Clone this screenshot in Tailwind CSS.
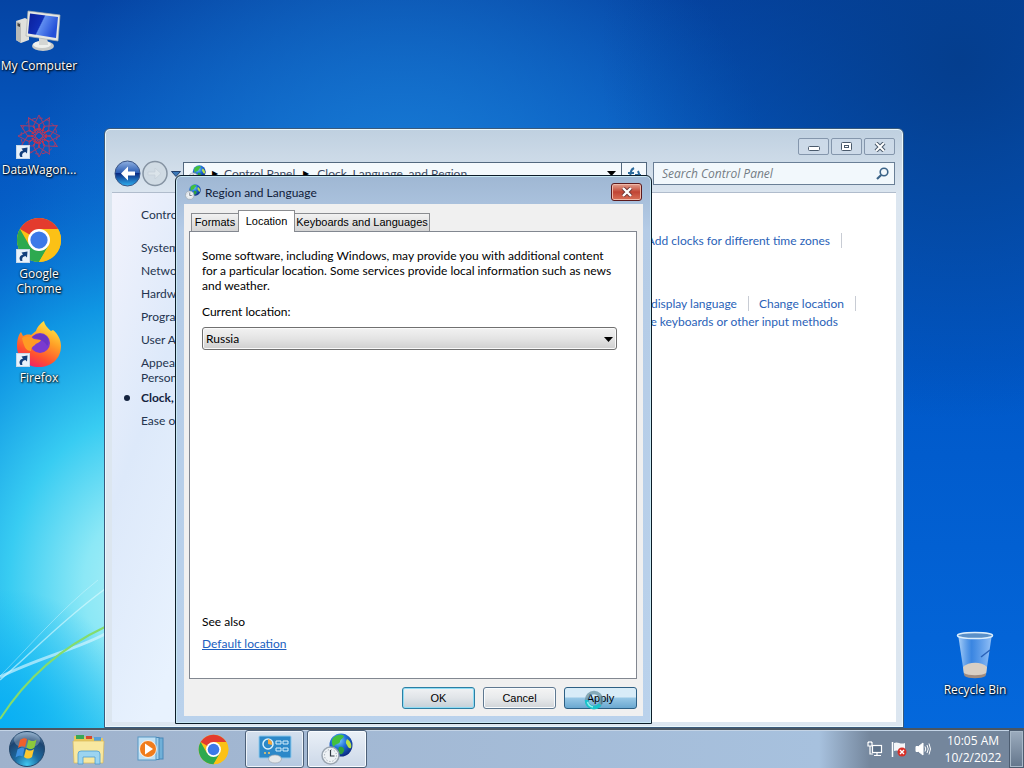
<!DOCTYPE html>
<html lang="en">
<head>
<meta charset="utf-8">
<title>Region and Language</title>
<script src="https://cdn.jsdelivr.net/npm/@tailwindcss/browser@4"></script>
</head>
<body class="flex h-screen flex-col overflow-hidden font-['Open_Sans','Noto_Sans',sans-serif] text-[12px] leading-[15px] text-black">

<!-- Shared artwork -->
<svg class="absolute size-0" aria-hidden="true">
  <defs>
    <radialGradient id="globeFill" cx=".4" cy=".3" r=".75"><stop offset="0" stop-color="#7fd0ff"/><stop offset=".45" stop-color="#1f6fd8"/><stop offset="1" stop-color="#08227a"/></radialGradient>
    <linearGradient id="screenFill" x1="0" y1="0" x2="1" y2=".4"><stop offset="0" stop-color="#0a1f9a"/><stop offset=".5" stop-color="#1030b8"/><stop offset=".54" stop-color="#5f8df0"/><stop offset="1" stop-color="#2450d8"/></linearGradient>
    <linearGradient id="foxFill" x1=".8" y1="0" x2=".3" y2="1"><stop offset="0" stop-color="#fff04a"/><stop offset=".4" stop-color="#ffa026"/><stop offset=".75" stop-color="#ff5030"/><stop offset="1" stop-color="#f0206a"/></linearGradient>
    <radialGradient id="orbFill" cx=".5" cy=".95" r=".9"><stop offset="0" stop-color="#40c8f0"/><stop offset=".4" stop-color="#1c6aa0"/><stop offset=".8" stop-color="#1d4470"/><stop offset="1" stop-color="#5f88b0"/></radialGradient>
    <linearGradient id="binFill" x1="0" y1="0" x2="1" y2="0"><stop offset="0" stop-color="#c8e4ff" stop-opacity=".85"/><stop offset=".4" stop-color="#5f9ce8" stop-opacity=".6"/><stop offset="1" stop-color="#b8d8ff" stop-opacity=".8"/></linearGradient>
    <linearGradient id="backFill" x1="0" y1="0" x2="0" y2="1"><stop offset="0" stop-color="#8fb0e0"/><stop offset=".48" stop-color="#2a5cb4"/><stop offset=".5" stop-color="#0a2c84"/><stop offset="1" stop-color="#30b0f0"/></linearGradient>
    <symbol id="chrome" viewBox="0 0 48 48">
      <circle cx="24" cy="24" r="23" fill="#fbc116"/>
      <path d="M24 24 4.1 12.5A23 23 0 0 1 43.9 12.5z" fill="#e33b2e"/>
      <path d="M4.1 12.5A23 23 0 0 0 24 47L34 29.7 24 24 14 29.7z" fill="#2da94f"/>
      <path d="M24 24 34 29.7 24 47A23 23 0 0 0 43.9 12.5H24z" fill="#fbc116"/>
      <circle cx="24" cy="24" r="11.5" fill="#fff"/><circle cx="24" cy="24" r="9" fill="#3c79e8"/>
    </symbol>
    <symbol id="shortcut" viewBox="0 0 14 14">
      <rect x=".5" y=".5" width="13" height="13" fill="#e8f2fb" stroke="#c8d8e8"/>
      <path d="M4.5 12C2.6 9.500 3.500 6.500 7 5.500L5.500 3.500l6-1-.5 6-1.600-1.500C7 7.500 5.500 9 6.500 12z" fill="#123f7c"/>
    </symbol>
    <symbol id="region" viewBox="0 0 32 32">
      <circle cx="20" cy="12" r="11.500" fill="url(#globeFill)"/>
      <path d="M12 5c4-4 9-4 11-2-1 3-4 3-4 6-2 3-5 1-6 5-2-1-3-6-1-9z" fill="#43c03c"/>
      <path d="M26 6c4 2 5 7 4 9-2 1-3-1-4-3-2-2-1-4 0-6z" fill="#b6e04a"/><path d="M18 14c3-1 6 1 5 4-1 2-2 4-4 3-2-2-2-5-1-7z" fill="#2fa13c"/>
      <circle cx="9.500" cy="22.500" r="8.500" fill="#eef2f5" stroke="#9aa5b0" stroke-width="1.500"/>
      <circle cx="9.500" cy="22.500" r="6" fill="none" stroke="#8a95a0" stroke-width="1" stroke-dasharray="1 2.100"/>
      <path d="M9.500 17v6h4" fill="none" stroke="#303840" stroke-width="1.200"/>
    </symbol>
  </defs>
</svg>

<main class="relative min-h-0 flex-1 overflow-hidden bg-[#0055c4]">
  <!-- Wallpaper -->
  <svg class="absolute inset-0 size-full" viewBox="0 0 1024 728" preserveAspectRatio="none" aria-hidden="true">
    <defs>
      <linearGradient id="sky" x1="0" y1="0" x2="0" y2="1"><stop offset="0" stop-color="#0544a4"/><stop offset=".2" stop-color="#0558c0"/><stop offset=".5" stop-color="#0058c8"/><stop offset="1" stop-color="#0468dc"/></linearGradient>
      <radialGradient id="glow" gradientUnits="userSpaceOnUse" cx="155" cy="585" r="470" gradientTransform="matrix(.8 0 0 1 20 0)"><stop offset="0" stop-color="#b0f0f6"/><stop offset=".16" stop-color="#8ce8f6"/><stop offset=".36" stop-color="#38ccf2"/><stop offset=".6" stop-color="#109ce6" stop-opacity=".9"/><stop offset="1" stop-color="#0660cc" stop-opacity="0"/></radialGradient>
      <radialGradient id="haze" gradientUnits="userSpaceOnUse" cx="400" cy="230" r="380"><stop offset="0" stop-color="#1b80d8"/><stop offset="1" stop-color="#1b80d8" stop-opacity="0"/></radialGradient>
      <radialGradient id="dusk" gradientUnits="userSpaceOnUse" cx="960" cy="60" r="360"><stop offset="0" stop-color="#043e8e"/><stop offset="1" stop-color="#043e8e" stop-opacity="0"/></radialGradient>
      <radialGradient id="corner" gradientUnits="userSpaceOnUse" cx="0" cy="728" r="140"><stop offset="0" stop-color="#08b0f4"/><stop offset="1" stop-color="#08b0f4" stop-opacity="0"/></radialGradient>
    </defs>
    <rect width="1024" height="728" fill="url(#sky)"/>
    <rect width="1024" height="728" fill="url(#haze)"/>
    <rect width="1024" height="728" fill="url(#dusk)"/>
    <rect width="1024" height="728" fill="url(#glow)"/>
    <rect width="1024" height="728" fill="url(#corner)"/>
    <path d="M0 680C35 650 60 622 105 589" fill="none" stroke="#e0fbff" stroke-width="1.500" opacity=".6"/>
    <path d="M0 676C28 648 60 610 98 580" fill="none" stroke="#e0fbff" stroke-width="1" opacity=".4"/>
    <path d="M0 677C40 657 75 650 105 634" fill="none" stroke="#d8f6ff" stroke-width="3" opacity=".65"/>
    <path d="M0 719C25 680 60 648 105 627" fill="none" stroke="#84dc6c" stroke-width="2"/>
  </svg>

  <!-- Desktop shortcuts -->
  <nav aria-label="Desktop" class="absolute left-0 top-[9px] flex w-[78px] flex-col text-white [text-shadow:1px_1px_2px_#000,0_0_2px_#000]">
    <a href="#computer" class="flex h-[104px] flex-col items-center gap-[3px] whitespace-nowrap">
      <svg class="h-[46px] w-[48px]" viewBox="0 0 48 46" aria-hidden="true">
        <path d="M1 12l9-3 4 2v20l-8 3-5-3z" fill="#dfe0dc"/><path d="M1 12l5 2v20l-5-3z" fill="#b8bab8"/><path d="M2.500 14l2.500 1v3l-2.500-1z" fill="#444"/>
        <ellipse cx="28" cy="37" rx="11" ry="5" fill="#c8cac8"/><ellipse cx="27" cy="35.500" rx="9" ry="3.500" fill="#eef0ee"/><path d="M24 27h8l1 9h-9z" fill="#d4d6d4"/>
        <path d="M13 2l32 4-2 26-32-5z" fill="#e6e8e4" stroke="#aab0b0" stroke-width=".7"/><path d="M15 4.500l28 3.500-2 21-28-4.500z" fill="url(#screenFill)"/>
      </svg>
      My Computer
    </a>
    <a href="#datawagon" class="flex h-[104px] flex-col items-center gap-[3px] whitespace-nowrap">
      <span class="relative">
        <svg class="h-[46px] w-[46px]" viewBox="0 0 46 46" fill="none" stroke="#a83c68" stroke-width="1" aria-hidden="true">
          <g id="star"><path d="M23 2l6 12-6 6-6-6zM23 44l6-12-6-6-6 6zM2 23l12 6 6-6-6-6zM44 23l-12 6-6-6 6-6z"/></g>
          <use href="#star" transform="rotate(30 23 23)"/><use href="#star" transform="rotate(60 23 23)"/>
          <circle cx="23" cy="23" r="7" stroke="#c83048" stroke-width="2" stroke-dasharray="2 1"/><circle cx="23" cy="23" r="18" stroke-dasharray="4 3"/>
        </svg>
        <svg class="absolute bottom-0 left-0 size-[14px]" aria-hidden="true"><use href="#shortcut"/></svg>
      </span>
      DataWagon...
    </a>
    <a href="#chrome-app" class="flex h-[104px] flex-col items-center gap-[3px] text-center">
      <span class="relative h-[46px] w-[46px]">
        <svg class="size-[46px]" aria-hidden="true"><use href="#chrome"/></svg>
        <svg class="absolute bottom-0 left-0 size-[14px]" aria-hidden="true"><use href="#shortcut"/></svg>
      </span>
      <span>Google<br>Chrome</span>
    </a>
    <a href="#firefox-app" class="flex h-[104px] flex-col items-center gap-[3px]">
      <span class="relative h-[46px] w-[46px]">
        <svg class="size-[46px]" viewBox="0 0 46 46" aria-hidden="true">
          <path d="M1 25C1 18 3 13 5 11l2 4c2-1 5-2 8-1 2-1 3-3 5-4 1-4 5-8 8-10 1 5 4 7 7 10l2-1c5 4 8 10 8 16 0 13-10 21-22 21S1 38 1 25z" fill="url(#foxFill)"/>
          <circle cx="24" cy="22" r="10" fill="#7a3ad0"/><path d="M16 16c4-4 12-4 15 0 2 3 2 7 0 9-2-5-7-7-15-9z" fill="#6a34c4"/>
          <path d="M6 17c5-3 9-1 12 1l7 1c-1 3-5 3-6 5-3 2-4 3-4 6-5 0-7-4-9-13z" fill="#ff9a24"/>
        </svg>
        <svg class="absolute bottom-0 left-0 size-[14px]" aria-hidden="true"><use href="#shortcut"/></svg>
      </span>
      Firefox
    </a>
  </nav>

  <a href="#bin" class="absolute bottom-[31px] right-[14px] flex w-[70px] flex-col items-center gap-[3px] whitespace-nowrap text-white [text-shadow:1px_1px_2px_#000,0_0_2px_#000]">
    <svg class="h-[48px] w-[40px]" viewBox="0 0 40 48" aria-hidden="true">
      <path d="M3 3h34l-6 40c-4 4-18 4-22 0z" fill="url(#binFill)"/>
      <path d="M8 36c5-5 18-6 24 0l-1 7c-4 4-18 4-22 0z" fill="#d8cfc4"/><path d="M9 42c4 3 18 3 22 0l-.5 3c-4 3-17 3-21 0z" fill="#a08c80"/>
      <path d="M26 26l9-7" stroke="#2a62b8" stroke-width="1.500"/>
      <ellipse cx="20" cy="4.500" rx="17.500" ry="3" fill="#5a90c8" stroke="#dceefc" stroke-width="1.500"/>
    </svg>
    Recycle Bin
  </a>

  <!-- Control Panel window -->
  <section aria-label="Clock, Language, and Region" class="absolute bottom-0 left-[104px] top-[128px] flex w-[800px] flex-col rounded-t-[6px] border border-[#3a5a7c] bg-linear-to-b from-[#bfd0e0] to-[#dce6f0] to-[66px] px-[7px] pb-[5px] font-['Lato','Open_Sans',sans-serif] shadow-[inset_0_0_0_1px_#eaf8fc]">
    <header class="flex justify-end gap-[2px] pr-px pt-[9px]">
      <button aria-label="Minimize" class="grid h-[17px] w-[31px] place-items-center rounded-[2px] border border-[#8496ac] bg-[#cfdce9]/70"><svg class="h-[9px] w-[12px]" viewBox="0 0 12 9"><rect x=".5" y="4.500" width="11" height="4" rx="1" fill="#fff" stroke="#4a5a6c"/></svg></button>
      <button aria-label="Maximize" class="grid h-[17px] w-[31px] place-items-center rounded-[2px] border border-[#8496ac] bg-[#cfdce9]/70"><svg class="h-[9px] w-[11px]" viewBox="0 0 11 9"><rect x=".5" y=".5" width="10" height="8" rx="1" fill="#fff" stroke="#4a5a6c"/><rect x="3.500" y="3.500" width="4" height="2" fill="#fff" stroke="#4a5a6c"/></svg></button>
      <button aria-label="Close" class="grid h-[17px] w-[31px] place-items-center rounded-[2px] border border-[#8496ac] bg-[#cfdce9]/70"><svg class="h-[10px] w-[12px]" viewBox="0 0 12 10"><path d="M2 1l8 8M10 1L2 9" stroke="#4a5a6c" stroke-width="4"/><path d="M2 1l8 8M10 1L2 9" stroke="#fff" stroke-width="2"/></svg></button>
    </header>
    <div class="flex h-[37px] items-center pl-[2px] pr-px">
      <div class="flex w-[69px] shrink-0 items-center">
        <button aria-label="Back" class="size-[27px] shrink-0 rounded-full"><svg class="size-[27px]" viewBox="0 0 27 27"><circle cx="13.500" cy="13.500" r="12.500" fill="url(#backFill)" stroke="#3a5484"/><path d="M14 6.500l-7 7 7 7v-5h7v-4h-7z" fill="#fff"/></svg></button>
        <button aria-label="Forward" class="size-[27px] shrink-0 rounded-full"><svg class="size-[27px]" viewBox="0 0 27 27"><circle cx="14" cy="13.500" r="12" fill="#d0dbe4" stroke="#8593a2" stroke-width="1.500"/><path d="M14 8l6 5.500-6 5.500v-4H7v-3h7z" fill="#dbe4ea" stroke="#c4cfd8" stroke-width=".7"/></svg></button>
        <button aria-label="Recent pages" class="ml-[3px] shrink-0"><svg class="h-[6px] w-[10px]" viewBox="0 0 10 6"><path d="M.5.500h9L5 5.500z" fill="#3a78b8" stroke="#22406c"/></svg></button>
      </div>
      <div class="flex h-[23px] w-[464px] shrink-0 items-center border border-[#52687e] bg-[#f4f9fc] text-[#3c4a64]">
        <svg class="ml-[4px] size-[18px]" aria-hidden="true"><use href="#region"/></svg>
        <span class="w-[18px] text-center text-[8px] text-black">▶</span><span>Control Panel</span>
        <span class="w-[22px] text-center text-[8px] text-black">▶</span><span>Clock, Language, and Region</span>
        <button aria-label="Previous locations" class="ml-auto pr-[5px]"><svg class="h-[5px] w-[9px]" viewBox="0 0 9 5"><path d="M0 0h9L4.500 5z" fill="#000"/></svg></button>
        <button aria-label="Refresh" class="grid h-full w-[25px] place-items-center border-l border-[#52687e]"><svg class="h-[14px] w-[16px]" viewBox="0 0 16 14" fill="none" stroke="#2b6a9c" stroke-width="2"><path d="M8 1C4 3 4 8 5 12M2 6h6M12 13c2-4 1-7 0-9M9 8h6"/></svg></button>
      </div>
      <label class="ml-[6px] flex h-[23px] min-w-0 flex-1 items-center border border-[#6a7f96] bg-[#f2f8fc] pl-[8px] pr-[5px]">
        <input type="search" aria-label="Search Control Panel" placeholder="Search Control Panel" class="min-w-0 flex-1 bg-transparent font-['Open_Sans',sans-serif] italic outline-none placeholder:text-[#747c84]">
        <svg class="size-[13px]" viewBox="0 0 13 13" fill="none" stroke="#3c6488" aria-hidden="true"><circle cx="8" cy="5" r="3.800" stroke-width="1.600"/><path d="M5.200 8L1 12" stroke-width="2.200"/></svg>
      </label>
    </div>
    <div class="flex min-h-0 flex-1 border-t border-[#b0bccc] bg-white">
      <nav aria-label="Control Panel categories" class="flex w-[190px] shrink-0 flex-col bg-linear-to-br from-[#f2f3fc] via-[#dde9fa] via-30% to-[#e8f2fe] to-60% pl-[29px] pt-[14px] text-[#24344f] [&>a]:mb-[8px]">
        <a href="#home">Control Panel Home</a>
        <a href="#system" class="mt-[10px]">System and Security</a>
        <a href="#network">Network and Internet</a>
        <a href="#hardware">Hardware and Sound</a>
        <a href="#programs">Programs</a>
        <a href="#users">User Accounts</a>
        <a href="#appearance">Appearance and<br>Personalization</a>
        <div class="-ml-[18px] mb-[8px] -mt-[3px] flex items-center whitespace-nowrap font-bold text-[#14233e]"><span class="ml-px mr-[11px] size-[6px] shrink-0 rounded-full bg-[#14233e]"></span>Clock, Language, and Region</div>
        <a href="#ease">Ease of Access</a>
      </nav>
      <div class="flex flex-1 flex-col items-end pr-[40px] pt-[40px] text-[#2a62b8]">
        <div class="mr-[14px] border-r border-[#c8ccd4] pr-[11px]"><a href="#clocks">Add clocks for different time zones</a></div>
        <div class="mt-[48px] flex">
          <a href="#display" class="border-r border-[#c8ccd4] pr-[11px]">Change display language</a>
          <a href="#location" class="border-r border-[#c8ccd4] pl-[10px] pr-[11px]">Change location</a>
        </div>
        <a href="#keyboards" class="mr-[18px] mt-[3px]">Change keyboards or other input methods</a>
      </div>
    </div>
  </section>

  <!-- Region and Language dialog -->
  <section role="dialog" aria-label="Region and Language" class="absolute left-[175px] top-[175px] flex h-[549px] w-[477px] flex-col rounded-t-[6px] border border-[#0c1c28] bg-linear-to-b from-[#9fb7d3] via-[#b4cbe6] via-10% to-[#bad2ec] px-[8px] pb-[7px] shadow-[inset_0_0_0_1px_#c8e8f4]">
    <header class="flex h-[28px] items-center gap-[4px] pt-[4px]">
      <svg class="ml-[1px] size-[16px]" aria-hidden="true"><use href="#region"/></svg>
      <h1 class="font-['Lato','Open_Sans',sans-serif] text-[#10203a]">Region and Language</h1>
      <button aria-label="Close" class="ml-auto mr-[1px] grid h-[18px] w-[31px] place-items-center rounded-[3px] border border-[#5c1a1c] bg-linear-to-b from-[#e0a090] from-0% via-[#c04434] via-50% to-[#d87058] shadow-[inset_0_0_0_1px_#f0b8a8]"><svg class="h-[10px] w-[12px]" viewBox="0 0 12 10"><path d="M2 1l8 8M10 1L2 9" stroke="#6a3434" stroke-width="4"/><path d="M2 1l8 8M10 1L2 9" stroke="#fff" stroke-width="2.400"/></svg></button>
    </header>
    <div class="flex min-h-0 flex-1 flex-col bg-[#f0f0f0] pb-[7px] pl-[5px] pr-[6px] pt-[6px]">
      <div role="tablist" class="relative z-10 -mb-px flex items-end pl-[2px] font-['Liberation_Sans',sans-serif] text-[11px]">
        <button role="tab" class="mb-px h-[18px] w-[48px] border border-b-0 border-[#8a8c90] bg-linear-to-b from-[#f2f2f2] to-[#d4d4d4] leading-[17px]">Formats</button>
        <button role="tab" aria-selected="true" class="-mx-px h-[22px] w-[57px] border border-b-0 border-[#8a8c90] bg-white">Location</button>
        <button role="tab" class="mb-px h-[18px] w-[136px] whitespace-nowrap border border-b-0 border-[#8a8c90] bg-linear-to-b from-[#f2f2f2] to-[#d4d4d4] leading-[17px]">Keyboards and Languages</button>
      </div>
      <div role="tabpanel" class="flex min-h-0 flex-1 flex-col border border-[#828790] bg-white px-[12px] pb-[27px] pt-[16px] font-['Lato','Open_Sans',sans-serif]">
        <p class="whitespace-nowrap">Some software, including Windows, may provide you with additional content<br>for a particular location. Some services provide local information such as news<br>and weather.</p>
        <label for="loc" class="mt-[11px]">Current location:</label>
        <div class="relative mt-[8px] w-[415px]">
          <select id="loc" class="block h-[23px] w-full appearance-none rounded-[3px] border border-[#707070] bg-linear-to-b from-[#f2f2f2] via-[#e4e4e4] via-50% to-[#cfcfcf] pl-[3px] shadow-[inset_0_0_0_1px_#fafafa]"><option>Russia</option></select>
          <svg class="pointer-events-none absolute right-[4px] top-[10px] h-[5px] w-[9px]" viewBox="0 0 9 5" aria-hidden="true"><path d="M0 0h9L4.500 5z" fill="#000"/></svg>
        </div>
        <p class="mt-auto">See also</p>
        <a href="#default" class="mt-[7px] self-start text-[#2060c0] underline">Default location</a>
      </div>
      <div class="mt-[8px] flex justify-end gap-[8px] font-['Liberation_Sans',sans-serif] text-[11px]">
        <button class="h-[22px] w-[73px] rounded-[3px] border border-[#2c7fa4] bg-linear-to-b from-[#f0f2f4] via-[#e0e4e8] via-50% to-[#c4d0d8] shadow-[inset_0_0_0_1px_#8fdcf4]">OK</button>
        <button class="h-[22px] w-[73px] rounded-[3px] border border-[#5f7890] bg-linear-to-b from-[#f4f4f4] via-[#e8eaec] via-50% to-[#d0d4d8] shadow-[inset_0_0_0_1px_#f8fcff]">Cancel</button>
        <button class="relative h-[22px] w-[73px] rounded-[3px] border border-[#2c5f84] bg-linear-to-b from-[#d8ecf8] from-45% via-[#98c8e6] via-50% to-[#6aa8d0]">Apply
          <svg class="absolute left-[19px] top-[2px] size-[20px]" viewBox="0 0 20 20" fill="none" aria-hidden="true"><circle cx="10" cy="10" r="7.500" stroke="#6a94a4" stroke-width="3.500" opacity=".75"/><path d="M2.500 10A7.500 7.500 0 0 0 16 14.500" stroke="#18c4cc" stroke-width="3.500"/><path d="M3.500 12A7 7 0 0 0 9 17" stroke="#8ff4f0" stroke-width="1.500"/></svg>
        </button>
      </div>
    </div>
  </section>
</main>

<!-- Taskbar -->
<footer class="flex h-[40px] shrink-0 items-stretch border-t-2 border-t-[#4a5662] bg-linear-to-r from-[#9fb2cc] from-0% via-[#a7c1de] via-80% to-[#74869c] to-85% shadow-[inset_0_1px_0_#c4d4e6]">
  <button aria-label="Start" class="ml-[8px] w-[38px]"><svg class="size-[38px]" viewBox="0 0 38 38">
    <circle cx="19" cy="19" r="17.500" fill="url(#orbFill)" stroke="#24486c"/><ellipse cx="19" cy="10" rx="13" ry="8" fill="#fff" opacity=".25"/>
    <path d="M12 10c3-2 5-2 7-1l-2 8c-2-1-4-1-7 1z" fill="#f0602c"/><path d="M20.500 9.500c3 2 5 2 8 0l-2 8c-3 2-5 2-8 0z" fill="#8cc83c"/><path d="M9.500 19.500c3-2 5-2 7-1l-2 8c-2-1-4-1-7 1z" fill="#3c90e0"/><path d="M18 19c3 2 5 2 8 0l-2 8c-3 2-5 2-8 0z" fill="#fcc830"/></svg></button>
  <button aria-label="Windows Explorer" class="ml-[12px] grid w-[62px] place-items-center"><svg class="h-[32px] w-[34px]" viewBox="0 0 34 32">
    <path d="M2 3h10l2 2h17v24H2z" fill="#e8c860"/><path d="M4 2h8v4H4z" fill="#38a858"/><path d="M14 3h6v3h-6z" fill="#d84830"/><path d="M22 4h7v4h-7z" fill="#58a0d8"/><path d="M1 8h31l-1 22H2z" fill="#f8e8a0" stroke="#d8b858" stroke-width=".7"/><path d="M6 31V21q0-3 3-3h16q3 0 3 3v10h-5v-7H11v7z" fill="#9cd4f0" stroke="#4c9cd0" stroke-width=".8"/></svg></button>
  <button aria-label="Windows Media Player" class="grid w-[62px] place-items-center"><svg class="h-[28px] w-[28px]" viewBox="0 0 28 28">
    <rect x="6" y="3" width="20" height="21" fill="#70b0d8" stroke="#4888b8"/><rect x="4" y="2.500" width="18" height="22" fill="#a0d0ec" stroke="#4888b8"/><rect x="1" y="2" width="18" height="23" fill="#c0e0f4" stroke="#5898c4"/><circle cx="11" cy="14" r="8.500" fill="#f07c1c" stroke="#fff" stroke-width=".8"/><path d="M8 8.500l8 5.500-8 5.500z" fill="#fff"/></svg></button>
  <button aria-label="Google Chrome" class="grid w-[62px] place-items-center"><svg class="size-[31px]"><use href="#chrome"/></svg></button>
  <button aria-label="Control Panel" class="ml-px grid w-[59px] place-items-center rounded-[3px] border border-[#4c6078] bg-linear-to-b from-[#d4e0ee] to-[#b4c8e0] shadow-[inset_0_0_0_1px_#eef4fa]"><svg class="h-[30px] w-[34px]" viewBox="0 0 34 30">
    <rect x="1" y="2" width="32" height="22" rx="1" fill="#2c88c8" stroke="#8cc8ec"/><circle cx="10" cy="10" r="5" fill="none" stroke="#d8f0fc" stroke-width="1.500"/><path d="M10 10V5a5 5 0 0 1 4 6z" fill="#f8a83c"/><path d="M18 7h5v3h-5zM25 7h5v3h-5zM18 14h5v3h-5zM25 14h5v3h-5z" fill="#2c88c8" stroke="#d8f0fc"/><path d="M7 18v2M11 18v2" stroke="#f8c860" stroke-width="1.500"/><ellipse cx="17" cy="25" rx="6.500" ry="4" fill="#e4e8ea" stroke="#a0a8b0" stroke-width=".7"/></svg></button>
  <button aria-label="Region and Language" class="ml-[3px] grid w-[60px] place-items-center rounded-[3px] border border-[#4c6078] bg-linear-to-b from-[#eaf0f7] to-[#ccd8e8] shadow-[inset_0_0_0_1px_#f8fcff]"><svg class="size-[32px]"><use href="#region"/></svg></button>
  <div class="ml-auto flex items-center text-white">
    <div class="flex items-center gap-[8px]">
      <svg class="h-[16px] w-[16px]" viewBox="0 0 16 16" fill="none" stroke="#fff" stroke-width="1.200" aria-label="Network"><rect x="5.500" y="4.500" width="9" height="7" fill="#5c7088"/><path d="M7 14.500h7M10 12v2M1 1v4h4V1M3 5v8h3M2 0v2M4 0v2"/></svg>
      <svg class="h-[16px] w-[16px]" viewBox="0 0 16 16" aria-label="Action Center"><path d="M1.500 1v15" stroke="#fff" stroke-width="1.500"/><path d="M3 2c4-2 6 2 11 0v8c-5 2-7-2-11 0z" fill="#f4f6f8"/><circle cx="11" cy="11" r="4.500" fill="#d83028"/><path d="M9 9l4 4M13 9l-4 4" stroke="#fff" stroke-width="1.400"/></svg>
      <svg class="h-[16px] w-[16px]" viewBox="0 0 16 16" fill="none" stroke="#fff" aria-label="Volume"><path d="M1 5.500h2.500L8 2v12L3.500 10.500H1z" fill="#fff"/><path d="M10 5.500q1.500 2.500 0 5M12 4q2.500 4 0 8M14 2.500q3 5.500 0 11"/></svg>
    </div>
    <time class="w-[78px] pb-px pl-[6px] text-center leading-[17px]">10:05 AM<br>10/2/2022</time>
    <button aria-label="Show desktop" class="h-full w-[15px] border border-[#4c5c70] bg-linear-to-b from-[#9cacbe] to-[#64768c] shadow-[inset_0_0_0_1px_#a8b8c8]"></button>
  </div>
</footer>
</body>
</html>
